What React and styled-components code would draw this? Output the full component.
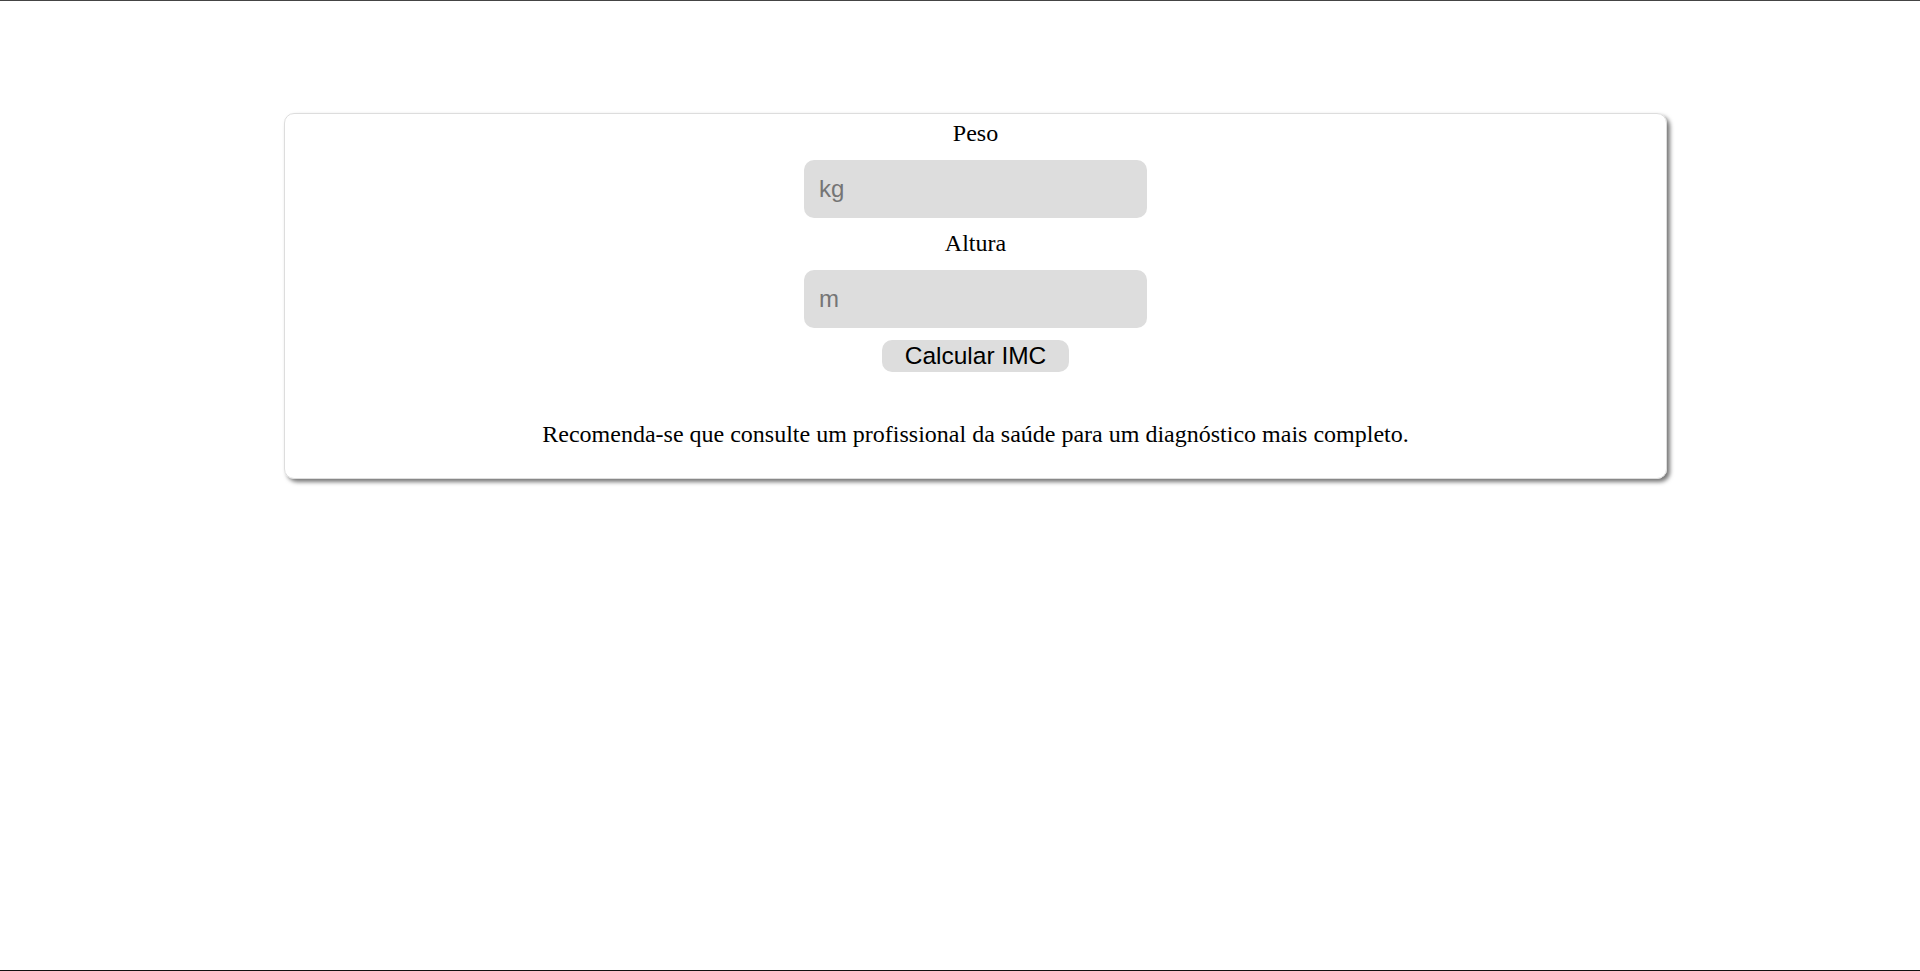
import React from "react";
import styled, { createGlobalStyle } from "styled-components";

const GlobalStyle = createGlobalStyle`
  html, body { margin: 0; padding: 0; background: #fff; }
  body { font-family: "Liberation Serif", "Times New Roman", serif; color: #000; }
`;

const Page = styled.div`
  height: 971px;
  box-sizing: border-box;
  display: flex;
  flex-direction: column;
  border-top: 1px solid #444;
  border-bottom: 1px solid #111;
`;

const Main = styled.main`
  flex: 1;
  padding-top: 112px;
  padding-left: 284px;
`;

const Card = styled.section`
  width: 1383px;
  box-sizing: border-box;
  border: 1px solid #ddd;
  border-radius: 10px;
  box-shadow: 3px 3px 4px #777;
  display: flex;
  flex-direction: column;
  align-items: center;
  padding: 6px 0 31px;
`;

const Label = styled.label`
  font-size: 24px;
  line-height: 26px;
  margin-bottom: 14px;
`;

const Input = styled.input`
  width: 343px;
  height: 58px;
  box-sizing: border-box;
  border: none;
  border-radius: 10px;
  background: #ddd;
  padding: 0 15px;
  font-family: "Liberation Sans", Arial, sans-serif;
  font-size: 24px;
  color: #000;
  outline: none;
  margin-bottom: 12px;
  &::placeholder { color: #757575; }
`;

const Button = styled.button`
  box-sizing: border-box;
  width: 187px;
  height: 32px;
  border: none;
  border-radius: 10px;
  background: #ddd;
  font-family: "Liberation Sans", Arial, sans-serif;
  font-size: 24.5px;
  color: #000;
  padding: 0;
  cursor: pointer;
`;

const Note = styled.p`
  margin: 49px 0 0;
  font-size: 24px;
  line-height: 26px;
`;

export default function App() {
  return (
    <>
      <GlobalStyle />
      <Page>
        <Main>
          <Card>
            <Label htmlFor="peso">Peso</Label>
            <Input id="peso" type="text" placeholder="kg" />
            <Label htmlFor="altura">Altura</Label>
            <Input id="altura" type="text" placeholder="m" />
            <Button type="button">Calcular IMC</Button>
            <Note>Recomenda-se que consulte um profissional da saúde para um diagnóstico mais completo.</Note>
          </Card>
        </Main>
      </Page>
    </>
  );
}
